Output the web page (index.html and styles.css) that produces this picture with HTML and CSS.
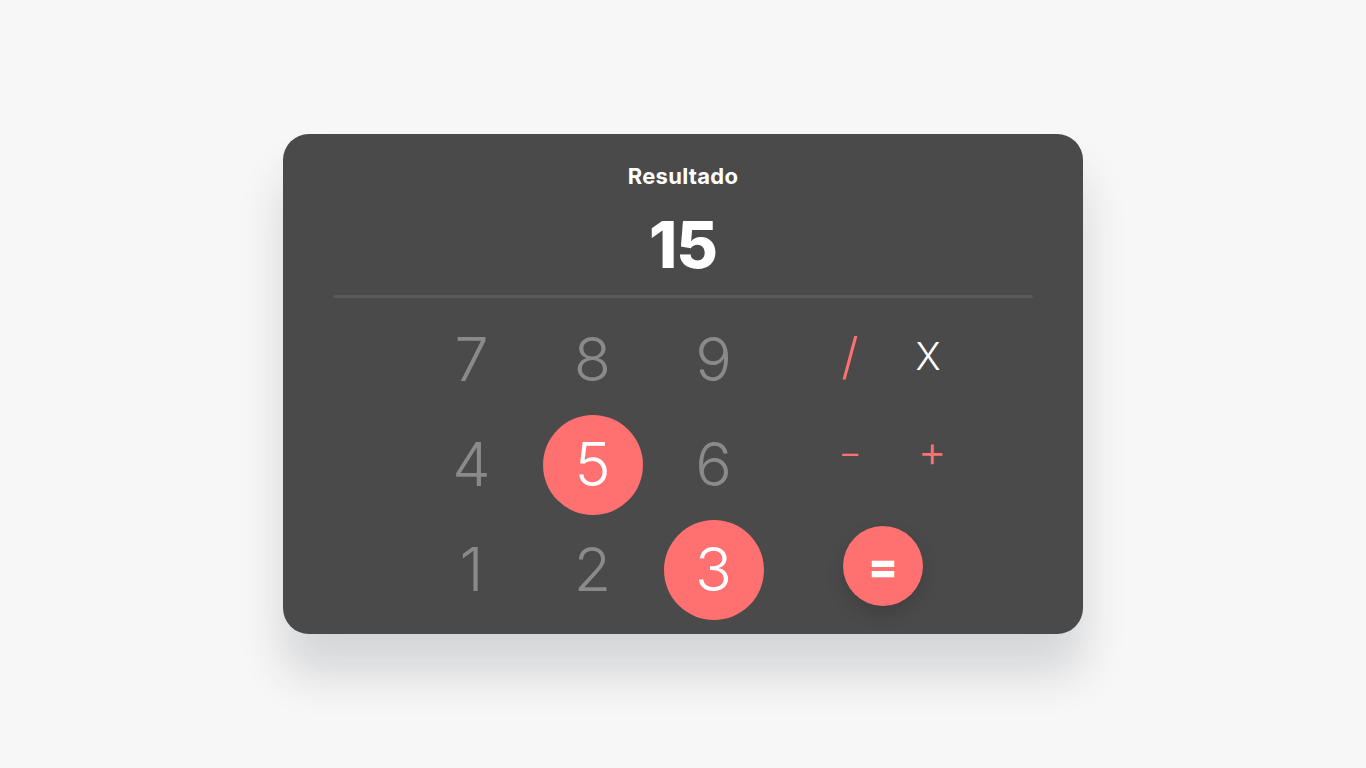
FILE: index.html
```html
<!DOCTYPE html>
<html lang="pt">
<head>
<meta charset="utf-8">
<title>Calculadora</title>
<link rel="stylesheet" href="styles.css">
</head>
<body>
<main class="card">
  <h1 class="label">Resultado</h1>
  <div class="result">15</div>
  <div class="divider"></div>
  <div class="keypad">
    <div class="digits">
      <button class="key">7</button>
      <button class="key">8</button>
      <button class="key">9</button>
      <button class="key">4</button>
      <button class="key key-active">5</button>
      <button class="key">6</button>
      <button class="key">1</button>
      <button class="key">2</button>
      <button class="key key-active">3</button>
    </div>
    <div class="ops">
      <button class="op op-accent op-slash">/</button>
      <button class="op op-light">X</button>
      <button class="op op-accent op-minus">−</button>
      <button class="op op-accent op-plus">+</button>
      <button class="equals">=</button>
    </div>
  </div>
</main>
</body>
</html>
```
FILE: styles.css
```css
* { box-sizing: border-box; }

html, body {
  margin: 0;
  height: 100%;
}

body {
  background: #f7f7f7;
  display: flex;
  align-items: center;
  justify-content: center;
  font-family: Inter, "Open Sans", sans-serif;
}

.card {
  width: 800px;
  height: 500px;
  background: #4a4a4a;
  border-radius: 26px;
  padding: 30px 50px 0;
  box-shadow: 0 40px 45px rgba(40, 45, 55, 0.16);
  display: flex;
  flex-direction: column;
}

.label {
  margin: 0;
  text-align: center;
  color: #ffffff;
  font-size: 22px;
  line-height: 24px;
  font-weight: 700;
  letter-spacing: 0.3px;
}

.result {
  margin-top: 22px;
  text-align: center;
  color: #ffffff;
  font-size: 64px;
  line-height: 70px;
  font-weight: 800;
  letter-spacing: -1px;
}

.divider {
  margin-top: 15px;
  height: 3px;
  border-radius: 2px;
  background: #595959;
}

.keypad {
  margin-top: 9px;
  padding-left: 78px;
  display: flex;
  gap: 36px;
}

.digits {
  display: grid;
  grid-template-columns: repeat(3, 121px);
  grid-template-rows: repeat(3, 105px);
  justify-items: center;
  align-items: center;
}

button {
  font-family: inherit;
  border: 0;
  background: none;
  padding: 0;
  cursor: pointer;
}

.key {
  width: 100px;
  height: 100px;
  border-radius: 50%;
  color: #8a8a8a;
  font-size: 61px;
  line-height: 1;
  font-weight: 300;
  display: flex;
  align-items: center;
  justify-content: center;
}

.key-active {
  background: #ff7070;
  color: #ffffff;
}

.ops {
  display: grid;
  grid-template-columns: 80px 80px;
  grid-template-rows: 98px 100px auto;
  justify-items: center;
  align-items: center;
}

.op {
  font-size: 38px;
  line-height: 1;
  font-weight: 300;
}

.op-accent { color: #ff7070; }
.op-light { color: #ffffff; margin-left: -4px; }

.op-slash {
  font-size: 50px;
  font-weight: 300;
}

.op-minus {
  font-size: 36px;
  font-weight: 300;
  margin-top: -6px;
}

.op-plus {
  font-size: 44px;
  font-weight: 300;
  margin-left: 4px;
  margin-top: -8px;
}

.equals {
  grid-column: 1 / span 2;
  justify-self: start;
  align-self: start;
  margin-left: 33px;
  margin-top: 21px;
  width: 80px;
  height: 80px;
  border-radius: 50%;
  background: #ff7070;
  color: #ffffff;
  font-size: 44px;
  line-height: 1;
  font-weight: 800;
  display: flex;
  align-items: center;
  justify-content: center;
  box-shadow: 0 8px 18px rgba(0, 0, 0, 0.14);
}
```
